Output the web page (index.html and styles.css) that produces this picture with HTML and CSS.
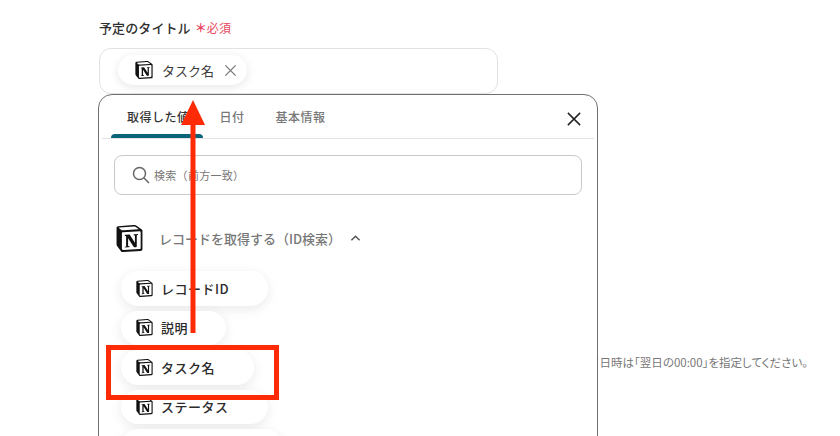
FILE: index.html
```html
<!DOCTYPE html>
<html lang="ja">
<head>
<meta charset="utf-8">
<title>予定のタイトル</title>
<link rel="stylesheet" href="styles.css">
</head>
<body>
<svg class="defs" width="0" height="0" aria-hidden="true">
  <symbol id="notion" viewBox="0 0 24 24">
    <path fill="#fff" d="M1 2l16-1.5 6 4.5v18l-17 1-5-5z"/>
    <path fill="#111" d="M4.459 4.208c.746.606 1.026.56 2.428.466l13.215-.793c.28 0 .047-.28-.046-.326L17.86 1.968c-.42-.326-.981-.7-2.055-.607L3.01 2.295c-.466.046-.56.28-.374.466zm.793 3.08v13.904c0 .747.373 1.027 1.214.98l14.523-.84c.841-.046.935-.56.935-1.167V6.354c0-.606-.233-.933-.748-.887l-15.177.887c-.56.047-.747.327-.747.933zm14.337.745c.093.42 0 .84-.42.888l-.7.14v10.264c-.608.327-1.168.514-1.635.514-.748 0-.935-.234-1.495-.933l-4.577-7.186v6.952L12.21 19s0 .84-1.168.84l-3.222.186c-.093-.186 0-.653.327-.746l.84-.233V9.854L7.822 9.76c-.094-.42.14-1.026.793-1.073l3.456-.233 4.764 7.279v-6.44l-1.215-.139c-.093-.514.28-.887.747-.933zM1.936 1.035l13.31-.98c1.634-.14 2.055-.047 3.082.7l4.249 2.986c.7.513.934.653.934 1.213v16.378c0 1.026-.373 1.634-1.68 1.726l-15.458.934c-.98.047-1.448-.093-1.962-.747l-3.129-4.06c-.56-.747-.793-1.306-.793-1.96V2.667c0-.839.374-1.54 1.447-1.632z"/>
  </symbol>
</svg>

<main class="page">
  <div class="field-label">
    <span>予定のタイトル</span>
    <span class="required"><span class="required-mark">＊</span>必須</span>
  </div>
  <div class="title-input">
    <span class="token">
      <svg class="icon-notion"><use href="#notion"/></svg>
      <span class="token-text">タスク名</span>
      <svg class="token-x" viewBox="0 0 14 14"><path d="M1.5 1.5l11 11M12.5 1.5l-11 11"/></svg>
    </span>
  </div>
  <p class="hint">終了日時は「翌日の00:00」を指定してください。</p>

  <section class="panel">
    <header class="tabs">
      <span class="tab tab-active">取得した値</span>
      <span class="tab">日付</span>
      <span class="tab">基本情報</span>
      <svg class="panel-close" viewBox="0 0 16 16"><path d="M1 1l14 14M15 1L1 15"/></svg>
    </header>
    <div class="panel-body">
      <div class="search">
        <svg class="search-icon" viewBox="0 0 18 18"><circle cx="7.5" cy="7.5" r="6"/><path d="M12 12l5 5"/></svg>
        <span>検索（前方一致）</span>
      </div>
      <div class="group-head">
        <svg class="icon-notion-lg"><use href="#notion"/></svg>
        <span class="group-title">レコードを取得する（ID検索）</span>
        <svg class="chevron" viewBox="0 0 12 8"><path d="M1.5 6.5L6 2l4.5 4.500"/></svg>
      </div>
      <ul class="chips">
        <li class="chip chip-a"><svg class="icon-notion"><use href="#notion"/></svg>レコードID</li>
        <li class="chip chip-b"><svg class="icon-notion"><use href="#notion"/></svg>説明</li>
        <li class="chip chip-c"><svg class="icon-notion"><use href="#notion"/></svg>タスク名</li>
        <li class="chip chip-a"><svg class="icon-notion"><use href="#notion"/></svg>ステータス</li>
        <li class="chip chip-d"></li>
      </ul>
    </div>
  </section>

  <div class="highlight"></div>
  <svg class="arrow" viewBox="0 0 24 233"><path d="M12 0L24 25H14.500V233H9.500V25H0z"/></svg>
</main>
</body>
</html>
```
FILE: styles.css
```css
* { box-sizing: border-box; }
html, body { margin: 0; height: 436px; overflow: hidden; background: #fff; }
body { font-family: "Noto Sans CJK JP", "Noto Sans", sans-serif; color: #333; }
.defs { position: absolute; }
.page { position: relative; height: 436px; padding: 18px 0 0 99px; overflow: hidden; }

.field-label { display: flex; gap: 4px; height: 18px; align-items: center; font-size: 13px; font-weight: 500; letter-spacing: .1px; color: #2e2e2e; }
.required { display: flex; align-items: center; font-size: 12px; font-weight: 400; color: #e8475f; }
.required-mark { font-weight: 700; }

.title-input { width: 399px; height: 46px; margin-top: 12px; padding: 6px 18px; background: #fff; border: 1px solid #e2e2e2; border-radius: 12px; }
.token { display: inline-flex; align-items: center; width: 129px; height: 30px; padding-left: 17px; background: #fff; border-radius: 15px; box-shadow: 0 2px 10px rgba(0, 0, 0, .1); }
.icon-notion { flex: none; width: 18px; height: 18px; }
.token-text { margin-left: 9px; font-size: 13px; color: #3a3a3a; }
.token-x { width: 13px; height: 13px; margin-left: 10px; fill: none; stroke: #777; stroke-width: 1.4; }

.hint { width: 709px; margin: 260px 0 0; font-size: 11.500px; font-feature-settings: "palt"; line-height: 16px; color: #777; text-align: right; white-space: nowrap; }

.panel { position: absolute; left: 98px; top: 94px; width: 500px; height: 400px; background: #fff; border: 1px solid #6f6f6f; border-radius: 14px; }
.tabs { position: relative; display: flex; height: 44px; margin: 0 3px; border-bottom: 1px solid #e4e4e4; }
.tab { padding-top: 13px; font-size: 12px; font-weight: 500; letter-spacing: .5px; line-height: 18px; color: #777; margin-right: 31px; }
.tab-active { position: relative; margin-left: 25px; margin-right: 30px; color: #333; }
.tab-active::after { content: ""; position: absolute; left: -16px; width: 92px; bottom: 0; height: 4px; background: #0b6478; border-radius: 4px 4px 0 0; }
.panel-close { position: absolute; right: 13px; top: 17px; width: 14px; height: 14px; fill: none; stroke: #222; stroke-width: 1.7; }

.panel-body { padding: 16px 15px 0; }
.search { display: flex; align-items: center; gap: 4px; width: 468px; height: 40px; padding-left: 17px; border: 1px solid #c9c9c9; border-radius: 8px; font-size: 11px; letter-spacing: .3px; color: #777; }
.search-icon { width: 18px; height: 18px; fill: none; stroke: #666; stroke-width: 1.5; }

.group-head { display: flex; align-items: center; height: 28px; margin-top: 29px; padding-left: 2px; }
.icon-notion-lg { flex: none; width: 27px; height: 27px; }
.group-title { margin-left: 16px; font-size: 13px; font-weight: 500; color: #777; white-space: nowrap; }
.chevron { width: 11px; height: 8px; margin-left: 9px; fill: none; stroke: #555; stroke-width: 1.6; }

.chips { display: flex; flex-direction: column; align-items: flex-start; gap: 5px; margin: 19px 0 0; padding: 0 0 0 7px; list-style: none; }
.chip { display: flex; flex: none; align-items: center; gap: 8px; height: 34.500px; padding-left: 15px; background: #fff; border-radius: 17px; box-shadow: 0 3px 12px rgba(0, 0, 0, .09); font-size: 13px; font-weight: 500; letter-spacing: .5px; color: #2b2b2b; }
.chip .icon-notion { width: 17px; height: 17px; }
.chip-a { width: 147px; }
.chip-b { width: 105px; }
.chip-c { width: 133px; }
.chip-d { width: 162px; }

.highlight { position: absolute; left: 106px; top: 345px; width: 173px; height: 55px; border: 5px solid #ff2b06; }
.arrow { position: absolute; left: 181px; top: 100px; width: 24px; height: 233px; fill: #ff2b06; }
```
